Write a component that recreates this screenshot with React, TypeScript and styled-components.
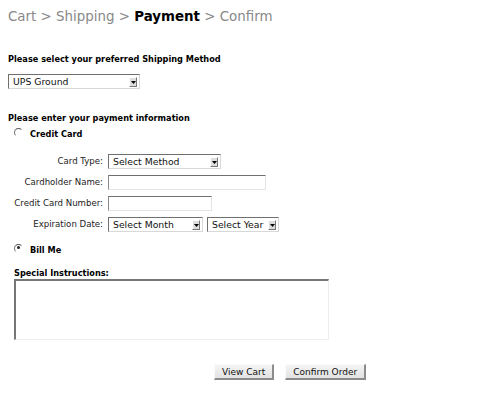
import React, { useState } from 'react';
import styled, { createGlobalStyle } from 'styled-components';

const GlobalStyle = createGlobalStyle`
  body {
    margin: 0;
    background: #fff;
    font-family: "DejaVu Sans", Verdana, sans-serif;
    color: #111;
  }
`;

const Page = styled.div`
  padding: 8px;
  width: 484px;
`;

const Crumbs = styled.div`
  font-size: 13.4px;
  line-height: 17px;
  color: #888;
  b {
    color: #000;
  }
`;

const Heading = styled.div<{ $top: number }>`
  margin-top: ${p => p.$top}px;
  font-size: 8.2px;
  line-height: 12px;
  font-weight: bold;
  color: #000;
`;

const SelectBox = styled.div<{ $width: number }>`
  display: flex;
  align-items: stretch;
  width: ${p => p.$width}px;
  height: 15px;
  box-sizing: border-box;
  border-top: 1px solid #6f6f6f;
  border-left: 1px solid #6f6f6f;
  border-right: 1px solid #d8d8d8;
  border-bottom: 1px solid #d8d8d8;
  background: #fff;
`;

const SelectInput = styled.select`
  appearance: none;
  flex: 1;
  min-width: 0;
  border: none;
  outline: none;
  background: transparent;
  padding: 0 0 0 4px;
  margin: 0;
  font-family: "DejaVu Sans", Verdana, sans-serif;
  font-size: 9.3px;
  line-height: 13px;
  color: #111;
`;

const ArrowBox = styled.span`
  display: flex;
  align-items: center;
  justify-content: center;
  width: 8px;
  margin: 2px 2px 1px 0;
  box-sizing: border-box;
  border-left: 1px solid #fff;
  border-top: 1px solid #fff;
  border-right: 1px solid #777;
  border-bottom: 1px solid #777;
  background: #ddd;
`;

const Select = ({ width, options }: { width: number; options: string[] }) => (
  <SelectBox $width={width}>
    <SelectInput defaultValue={options[0]}>
      {options.map(o => <option key={o}>{o}</option>)}
    </SelectInput>
    <ArrowBox>
      <svg width="5" height="3" viewBox="0 0 5 3"><path d="M0 0h5L2.5 3z" fill="#000" /></svg>
    </ArrowBox>
  </SelectBox>
);

const ShipSelect = styled.div`
  margin-top: 9px;
`;

const RadioRow = styled.label<{ $top: number }>`
  display: flex;
  align-items: center;
  gap: 7px;
  height: 14px;
  margin-top: ${p => p.$top}px;
  padding-left: 6px;
  font-size: 8.2px;
  font-weight: bold;
  color: #000;
`;

const Radio = styled.input`
  appearance: none;
  width: 9px;
  height: 9px;
  margin: 0;
  border-radius: 50%;
  box-sizing: border-box;
  border: 1.5px solid transparent;
  border-top-color: #555;
  border-left-color: #777;
  position: relative;
  transform: translateY(-2px);
  &:checked::after {
    content: '';
    position: absolute;
    left: 1.5px;
    top: 1.5px;
    width: 3px;
    height: 3px;
    border-radius: 50%;
    background: #222;
  }
`;

const FormGrid = styled.div`
  display: grid;
  grid-template-columns: 95px auto;
  column-gap: 5px;
  row-gap: 6px;
  margin-top: 13px;
`;

const Label = styled.div`
  text-align: right;
  font-size: 8.6px;
  line-height: 15px;
  color: #222;
  white-space: nowrap;
`;

const Field = styled.div`
  display: flex;
  gap: 4px;
  height: 15px;
`;

const TextInput = styled.input<{ $width: number }>`
  width: ${p => p.$width}px;
  height: 15px;
  box-sizing: border-box;
  margin: 0;
  padding: 0 3px;
  border-top: 1px solid #6f6f6f;
  border-left: 1px solid #8a8a8a;
  border-right: 1px solid #e4e4e4;
  border-bottom: 1px solid #e4e4e4;
  font-family: "DejaVu Sans", Verdana, sans-serif;
  font-size: 9.3px;
  outline: none;
`;

const Instructions = styled.div`
  margin-top: 10px;
  padding-left: 6px;
`;

const SubLabel = styled.div`
  font-size: 8.2px;
  line-height: 12px;
  font-weight: bold;
  color: #000;
`;

const TextArea = styled.textarea`
  display: block;
  width: 315px;
  height: 61px;
  box-sizing: border-box;
  margin: 0;
  resize: none;
  border-top: 2px solid #777;
  border-left: 2px solid #777;
  border-right: 1px solid #eee;
  border-bottom: 1px solid #eee;
  outline: none;
`;

const Actions = styled.div`
  display: flex;
  gap: 11px;
  margin-top: 24px;
  padding-left: 206px;
`;

const Button = styled.button`
  height: 16px;
  padding: 0 7px;
  box-sizing: border-box;
  font-family: "DejaVu Sans", Verdana, sans-serif;
  font-size: 9px;
  color: #111;
  background: linear-gradient(#f4f4f4, #e2e2e2);
  border: none;
  border-top: 1px solid #fafafa;
  border-left: 1px solid #fafafa;
  border-right: 2px solid #8c8c8c;
  border-bottom: 2px solid #8c8c8c;
  cursor: pointer;
`;

const App = () => {
  const [method, setMethod] = useState('bill');

  return (
    <Page>
      <GlobalStyle />
      <Crumbs>Cart &gt; Shipping &gt; <b>Payment</b> &gt; Confirm</Crumbs>

      <Heading $top={28}>Please select your preferred Shipping Method</Heading>
      <ShipSelect>
        <Select width={132} options={['UPS Ground', 'UPS 2nd Day Air', 'UPS Next Day Air']} />
      </ShipSelect>

      <Heading $top={23}>Please enter your payment information</Heading>
      <RadioRow $top={3}>
        <Radio type="radio" name="pay" checked={method === 'card'} onChange={() => setMethod('card')} />
        Credit Card
      </RadioRow>

      <FormGrid>
        <Label>Card Type:</Label>
        <Field><Select width={113} options={['Select Method', 'Visa', 'MasterCard', 'American Express']} /></Field>
        <Label>Cardholder Name:</Label>
        <Field><TextInput $width={158} /></Field>
        <Label>Credit Card Number:</Label>
        <Field><TextInput $width={104} /></Field>
        <Label>Expiration Date:</Label>
        <Field>
          <Select width={95} options={['Select Month', 'January', 'February', 'March']} />
          <Select width={72} options={['Select Year', '2024', '2025', '2026']} />
        </Field>
      </FormGrid>

      <RadioRow $top={11}>
        <Radio type="radio" name="pay" checked={method === 'bill'} onChange={() => setMethod('bill')} />
        Bill Me
      </RadioRow>

      <Instructions>
        <SubLabel>Special Instructions:</SubLabel>
        <TextArea />
      </Instructions>

      <Actions>
        <Button>View Cart</Button>
        <Button>Confirm Order</Button>
      </Actions>
    </Page>
  );
};

export default App;
